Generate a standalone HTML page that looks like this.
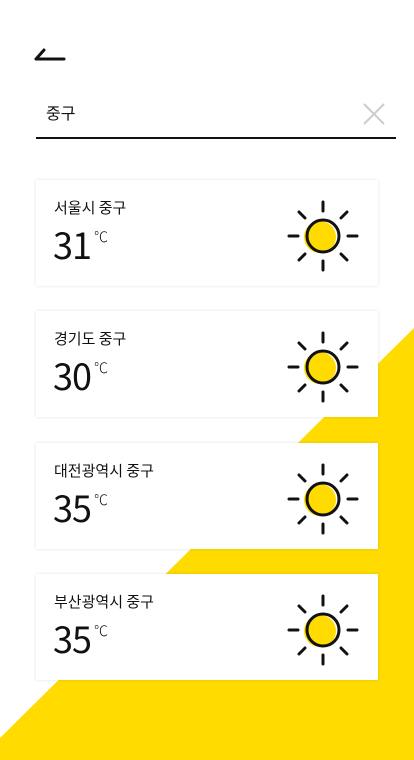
<!DOCTYPE html><html><head><meta charset="utf-8"><style>
body{margin:0;width:414px;height:760px;overflow:hidden;background:#fff;position:relative;font-family:"Noto Sans CJK KR",sans-serif;}
.bg{position:absolute;left:0;top:0;width:414px;height:760px}
.card{position:absolute;left:36px;width:342px;height:106px;background:#fff;box-shadow:0 0 3px rgba(0,0,0,0.12)}
.name{position:absolute;left:18px;top:17px;font-size:15px;color:#111}
.temp{position:absolute;left:17px;top:39px;font-size:36px;font-weight:400;color:#111;letter-spacing:-1px;line-height:1.4}
.temp sup{font-size:14px;position:relative;top:-4px;margin-left:3px;letter-spacing:0;font-weight:300}
.sun{position:absolute;left:250px;top:18px}
</style></head><body>
<svg class="bg" viewBox="0 0 414 760"><polygon points="414,328 414,760 0,760 0,738" fill="#FFDB00"/></svg>
<svg style="position:absolute;left:34px;top:46px" width="34" height="16"><path d="M2 13 L30 13 M2 13 L10 4" stroke="#111" stroke-width="3" fill="none" stroke-linecap="round"/></svg>
<div style="position:absolute;left:46px;top:100px;font-size:16px;color:#111">중구</div>
<svg style="position:absolute;left:362px;top:102px" width="24" height="24"><path d="M2 2L22 22M22 2L2 22" stroke="#ccc" stroke-width="2"/></svg>
<div style="position:absolute;left:36px;top:137px;width:360px;height:2px;background:#111"></div>
<script>
const d=[["서울시 중구","31",180],["경기도 중구","30",311],["대전광역시 중구","35",443],["부산광역시 중구","35",574]];
const sun=`<svg class="sun" width="76" height="76" viewBox="0 0 76 76"><circle cx="34" cy="39" r="16" fill="#FFDB00"/><circle cx="37" cy="38" r="16" fill="none" stroke="#111" stroke-width="3"/><g stroke="#111" stroke-width="3" stroke-linecap="round"><path d="M37 4V13M37 63V72M3 38H12M62 38H71M13 14L19 20M55 56L61 62M61 14L55 20M19 56L13 62"/></g></svg>`;
d.forEach(x=>document.write(`<div class="card" style="top:${x[2]}px"><div class="name">${x[0]}</div><div class="temp">${x[1]}<sup>℃</sup></div>${sun}</div>`));
</script>
</body></html>
